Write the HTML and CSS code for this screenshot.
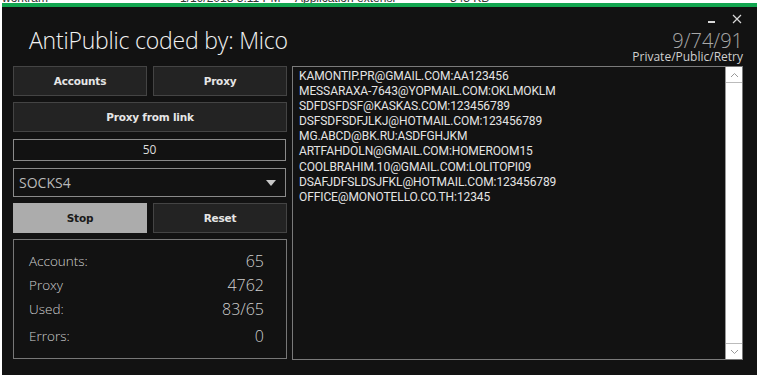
FILE: index.html
```
<!DOCTYPE html>
<html lang="en">
<head>
  <meta charset="UTF-8" />
  <meta name="viewport" content="width=device-width, initial-scale=1.0" />
  <title>AntiPublic</title>
  <link rel="stylesheet" href="styles.css">
</head>
<body>
  <div class="desktop-strip">
    <span class="d-name">workram</span>
    <span class="d-date">1/19/2018 3:11 PM</span>
    <span class="d-type">Application extensi</span>
    <span class="d-size">343 KB</span>
  </div>

  <div class="window">
    <div class="titlebar">
      <h1 class="app-title">AntiPublic coded by: Mico</h1>
      <div class="title-right">
        <div class="win-controls">
          <span class="win-min"></span>
          <svg class="win-close" width="10" height="10" viewBox="0 0 10 10">
            <path d="M1 1 L9 9 M9 1 L1 9" stroke="#d8d8d8" stroke-width="1.2" fill="none" />
          </svg>
        </div>
        <div class="stat-date">9/74/91</div>
        <div class="stat-kind">Private/Public/Retry</div>
      </div>
    </div>

    <div class="main">
      <div class="left-panel">
        <div class="btn-row">
          <button class="btn">Accounts</button>
          <button class="btn">Proxy</button>
        </div>
        <button class="btn btn-wide">Proxy from link</button>
        <div class="field">50</div>
        <div class="select">
          <span>SOCKS4</span>
          <span class="select-arrow"></span>
        </div>
        <div class="btn-row">
          <button class="btn btn-active">Stop</button>
          <button class="btn">Reset</button>
        </div>
        <div class="stats">
          <div class="stat-row"><span>Accounts:</span><span class="val">65</span></div>
          <div class="stat-row"><span>Proxy</span><span class="val">4762</span></div>
          <div class="stat-row"><span>Used:</span><span class="val">83/65</span></div>
          <div class="stat-row stat-last"><span>Errors:</span><span class="val">0</span></div>
        </div>
      </div>

      <div class="textbox">
        <div class="lines">
          <div>KAMONTIP.PR@GMAIL.COM:AA123456</div>
          <div>MESSARAXA-7643@YOPMAIL.COM:OKLMOKLM</div>
          <div>SDFDSFDSF@KASKAS.COM:123456789</div>
          <div>DSFSDFSDFJLKJ@HOTMAIL.COM:123456789</div>
          <div>MG.ABCD@BK.RU:ASDFGHJKM</div>
          <div>ARTFAHDOLN@GMAIL.COM:HOMEROOM15</div>
          <div>COOLBRAHIM.10@GMAIL.COM:LOLITOPI09</div>
          <div>DSAFJDFSLDSJFKL@HOTMAIL.COM:123456789</div>
          <div>OFFICE@MONOTELLO.CO.TH:12345</div>
        </div>
        <div class="scrollbar">
          <div class="sb-btn">
            <svg width="9" height="6" viewBox="0 0 9 6"><path d="M1 5 L4.5 1.5 L8 5" stroke="#999" stroke-width="1" fill="none" /></svg>
          </div>
          <div class="sb-track"></div>
          <div class="sb-btn sb-btn-bottom">
            <svg width="9" height="6" viewBox="0 0 9 6"><path d="M1 1 L4.5 4.5 L8 1" stroke="#999" stroke-width="1" fill="none" /></svg>
          </div>
        </div>
      </div>
    </div>
  </div>
</body>
</html>
```

FILE: styles.css
```
* {
  margin: 0;
  padding: 0;
  box-sizing: border-box;
}
body {
  background-color: #fff;
  font-family: 'Open Sans', 'Liberation Sans', sans-serif;
  width: 759px;
  height: 375px;
  overflow: hidden;
}
.desktop-strip {
  height: 3px;
  overflow: hidden;
  position: relative;
  font-family: 'Liberation Sans', sans-serif;
  font-size: 12px;
  line-height: 12px;
  color: #333;
  white-space: nowrap;
}
.desktop-strip span {
  position: absolute;
  top: -8px;
}
.d-name { left: 2px; }
.d-date { left: 180px; }
.d-type { left: 295px; }
.d-size { left: 450px; }

.window {
  margin-left: 2px;
  width: 755px;
  height: 372px;
  background-color: #121212;
  border-top: 4px solid #13a650;
}
.titlebar {
  display: flex;
  justify-content: space-between;
  height: 59px;
}
.app-title {
  font-weight: 300;
  font-size: 23px;
  line-height: 30px;
  color: #f2f2f2;
  padding: 18px 0 0 27px;
  letter-spacing: -0.2px;
}
.title-right {
  display: flex;
  flex-direction: column;
  align-items: flex-end;
  padding-right: 14px;
}
.win-controls {
  display: flex;
  align-items: flex-end;
  gap: 17px;
  height: 11px;
  margin-top: 6px;
  margin-right: 1px;
}
.win-min {
  width: 7px;
  height: 2px;
  background-color: #d8d8d8;
  margin-bottom: 1px;
}
.win-close {
  display: block;
}
.stat-date {
  font-weight: 300;
  font-size: 20px;
  line-height: 16px;
  color: #a8a8a8;
  margin-top: 9px;
}
.stat-kind {
  font-size: 12px;
  line-height: 12px;
  color: #cfcfcf;
  margin-top: 2px;
}

.main {
  display: flex;
  padding-left: 11px;
}
.left-panel {
  width: 274px;
  display: flex;
  flex-direction: column;
}
.btn-row {
  display: grid;
  grid-template-columns: 134px 134px;
  gap: 6px;
}
.btn {
  height: 30px;
  background-color: #232323;
  border: 1px solid #444;
  color: #e6e6e6;
  font-family: 'DejaVu Sans', sans-serif;
  font-weight: bold;
  font-size: 10.5px;
  letter-spacing: -0.2px;
}
.btn-wide {
  margin-top: 6px;
  width: 274px;
}
.btn-active {
  background-color: #acacac;
  border-color: #acacac;
  color: #1a1a1a;
}
.field {
  margin-top: 7px;
  height: 22px;
  border: 1px solid #8a8a8a;
  color: #dcdcdc;
  font-size: 12px;
  line-height: 20px;
  text-align: center;
  margin-right: 1px;
}
.select {
  margin-top: 7px;
  height: 29px;
  border: 1px solid #8a8a8a;
  color: #b8b8b8;
  font-size: 14px;
  display: flex;
  align-items: center;
  justify-content: space-between;
  padding: 0 9px 0 5px;
  margin-right: 1px;
  margin-bottom: 6px;
}
.select-arrow {
  width: 0;
  height: 0;
  border-left: 5px solid transparent;
  border-right: 5px solid transparent;
  border-top: 6px solid #c8c8c8;
}
.stats {
  margin-top: 6px;
  height: 120px;
  border: 1px solid #777;
  padding: 9px 22px 0 15px;
  color: #cfcfcf;
  font-weight: 300;
}
.stat-row {
  display: flex;
  justify-content: space-between;
  align-items: center;
  height: 24px;
  font-size: 13.5px;
}
.stat-last {
  height: 28px;
  padding-top: 2px;
}
.stat-row .val {
  font-size: 16px;
}

.textbox {
  margin-left: 5px;
  width: 451px;
  height: 294px;
  border: 1px solid #7a7a7a;
  display: flex;
}
.lines {
  flex: 1;
  padding: 2px 0 0 6px;
  font-family: Roboto, 'Open Sans', sans-serif;
  font-size: 12px;
  line-height: 15.1px;
  color: #e4e4e4;
  letter-spacing: -0.1px;
}
.scrollbar {
  width: 17px;
  background-color: #fff;
  display: flex;
  flex-direction: column;
  border-left: 1px solid #999;
}
.sb-btn {
  height: 16px;
  border-bottom: 1px solid #bbb;
  display: flex;
  align-items: center;
  justify-content: center;
}
.sb-btn-bottom {
  border-bottom: none;
  border-top: 1px solid #bbb;
}
.sb-track {
  flex: 1;
}
```
